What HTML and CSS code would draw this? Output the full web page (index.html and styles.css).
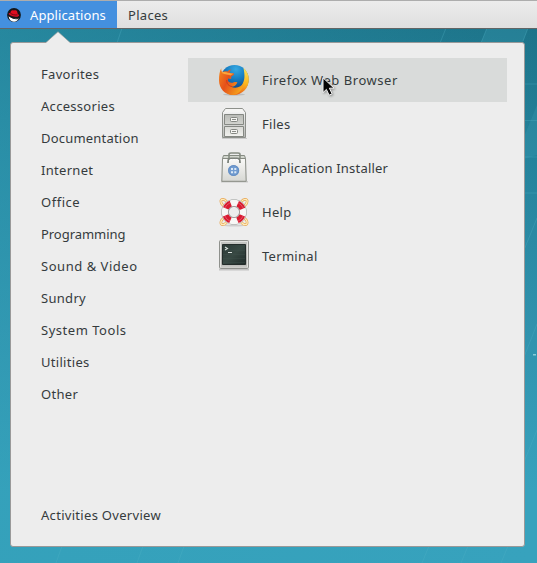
FILE: index.html
```html
<!DOCTYPE html>
<html lang="en">
<head>
<meta charset="utf-8">
<title>Applications</title>
<link rel="stylesheet" href="styles.css">
</head>
<body>
<svg class="wallpaper" viewBox="0 0 537 563" aria-hidden="true">
  <defs><linearGradient id="sky" x2="0" y2="1"><stop offset="0" stop-color="#1b7085"/><stop offset=".27" stop-color="#24829b"/><stop offset=".6" stop-color="#3193ae"/><stop offset=".87" stop-color="#37a2bd"/><stop offset="1" stop-color="#37a2bd"/></linearGradient>
  <linearGradient id="left" x2="1"><stop stop-color="#32a0b8" stop-opacity=".45"/><stop offset="1" stop-color="#32a0b8" stop-opacity="0"/></linearGradient></defs>
  <path fill="url(#sky)" d="M0 0h537v563H0z"/>
  <path fill="url(#left)" d="M0 0h537v563H0z"/>
  <path fill="#3b9bb4" fill-opacity=".3" d="M487 28h41l-14 40h-44zM537 105v50l-13 4v-22z"/>
  <path fill="none" stroke="#53b2c7" stroke-opacity=".3" d="M446 28l-6 15M487 28l-6 15M528 28l-5 13M524 84h13M524 120.500h13M524 157h13M524 193h13M537 218l-13 32M537 324l-13 33M537 430l-13 32M429 546l-7 17M468 546l-7 17M508 546l-7 17M62 546l-6 17M143 546l-6 17M184 546l-6 17M122 28l-5 15"/>
  <path fill="#8accd8" d="M533 354h3v1.500h-3z"/>
</svg>
<header class="topbar">
  <div class="tab active">
    <svg class="hat" viewBox="0 0 14 14"><circle cx="7" cy="7" r="6.900" fill="#14161a"/><path fill="#fff" d="M1.600 8.200c2 1.900 6 2.800 9.600 2l.5.500C10.500 12.800 8.800 13.700 7 13.700 4 13.600 2 11.500 1.600 8.200z"/><path fill="#111" d="M5 9.300c2 1.200 4 1.400 6.300.8v.8c-2.500.6-5 .2-6.300-.8z"/><path fill="#e00d20" d="M4 2.900c1-1.200 2-.7 3-.5 1-.4 2.700-.1 3.100.8l.7 2.800c1.300.7 1.500 1.400 1 2C10.200 9.700 4 8.600 1.700 6.300 1.400 5.500 2 5 3.300 5z"/><path stroke="#5c0811" stroke-width=".8" fill="none" d="M3.300 5.200c2 1.500 4.700 2.100 7.200 1.600"/></svg>
    <span class="app-label">Applications</span>
  </div>
  <div class="tab"><span class="places">Places</span></div>
</header>
<main class="menu">
  <svg class="pointer" viewBox="0 0 26 13"><path fill="#ededed" d="M1 13V11.500L13 .7 25 11.500V13z"/><path fill="none" stroke="#9b9b98" stroke-opacity=".65" d="M1 11.500 13 .7 25 11.500"/></svg>
  <nav class="categories">
    <a>Favorites</a><a>Accessories</a><a class="snug">Documentation</a><a>Internet</a><a class="wide">Office</a><a class="tight">Programming</a><a class="wide">Sound &amp; Video</a><a>Sundry</a><a class="wide">System Tools</a><a>Utilities</a><a>Other</a>
    <a class="overview">Activities Overview</a>
  </nav>
  <section class="apps">
    <div class="app selected">
      <svg viewBox="0 0 32 32">
        <defs><radialGradient id="globe" cx=".55" cy=".15" r=".75"><stop stop-color="#37a9e2"/><stop offset=".5" stop-color="#147abf"/><stop offset="1" stop-color="#123b7d"/></radialGradient><linearGradient id="fox" x1="0" y1="0" x2="1" y2=".5"><stop stop-color="#f58a1d"/><stop offset=".45" stop-color="#e5511b"/><stop offset="1" stop-color="#f5a11c"/></linearGradient><linearGradient id="tail" x2="0" y2="1"><stop stop-color="#ffe75b"/><stop offset=".6" stop-color="#fbb41e"/><stop offset="1" stop-color="#e9601b"/></linearGradient></defs>
        <ellipse cx="16" cy="30.500" rx="11" ry="1.200" fill="#999" opacity=".45"/>
        <circle cx="16.500" cy="15.200" r="14.200" fill="url(#globe)"/>
        <path fill="url(#tail)" d="M25.500 4c3 2.500 5.400 6.700 5.400 11.500C30.900 24 24 31 16 31c-4 0-8-2-10.500-5C12 29 21 28 24.500 20c2.200-4 2.600-8 1-16z"/>
        <path fill="url(#fox)" d="M3.300 4.300c-.2 1.800.2 3 .8 3.700 1.800-.9 3.700-1 5.500-.6 1-1.100 2.300-1.800 3.700-1.900-1.100 1-1.700 2.200-1.500 3.400l4.200.6c.4 1.300-1.300 2-2.700 3l-.2 2.400-2.700-.3c-1.400 2 .6 4.400 3.300 4.200 2.200-.3 3.400-1.600 5.700-.4-1.200 2.900-3.600 4.500-6.400 4.300 5 2.300 10.500.3 13-4.200-1 7-5.600 12.300-11 12.500C7.200 31.200 1 24.600 1 16.300 1 11.500 1.600 7 3.300 4.300z"/>
        <path fill="#ffbc48" opacity=".75" d="M3.600 8.500c2.200-.8 4.500-.6 6.200.3l2 .3 3.600.7-3.100 1.800C9 10 5.200 10.500 3.600 8.500z"/>
        <path fill="none" stroke="#cf351c" d="M8.800 16c-.5 3.500 2 6.300 5.300 6.500"/>
      </svg><span class="wide">Firefox Web Browser</span>
    </div>
    <div class="app">
      <svg viewBox="0 0 32 32"><defs><linearGradient id="metal" x2="0" y2="1"><stop stop-color="#fafafa"/><stop offset="1" stop-color="#b6b7b4"/></linearGradient><linearGradient id="drawer" x2="0" y2="1"><stop stop-color="#b9bbb6"/><stop offset="1" stop-color="#f2f2ef"/></linearGradient></defs>
        <path d="M4 30h25v1H4z" fill="#999" opacity=".4"/><path fill="url(#metal)" stroke="#8d908b" d="M4.500 4.500l3-4h17l3 4v25h-23z"/><path fill="#f5f5f3" d="M6 4l2.200-2.700h15.600L26 4z"/><g fill="url(#drawer)" stroke="#858883"><path d="M6.500 6.500h19v10h-19zM6.500 18.500h19v10h-19z"/></g><g fill="#f5f5f2" stroke="#858883"><rect x="12.500" y="9.500" width="7" height="4" rx="1"/><rect x="12.500" y="21.500" width="7" height="4" rx="1"/></g><path fill="#8a8c87" d="M14 11h4v1h-4zM14 23h4v1h-4z"/></svg><span>Files</span>
    </div>
    <div class="app">
      <svg viewBox="0 0 32 32"><defs><linearGradient id="bag" x2="0" y2="1"><stop stop-color="#fafaf8"/><stop offset="1" stop-color="#d6d7d3"/></linearGradient></defs><path d="M3 29h27v1.500H3z" fill="#888" opacity=".35"/><path fill="#d1d5cd" stroke="#858b82" d="M5.500 3.500h21l1 3h-23z"/><path fill="none" stroke="#868d83" stroke-width="1.600" d="M11 6V2.500q0-1.500 2-1.500h7q2 0 2 1.500V6"/><path fill="url(#bag)" stroke="#878b83" d="M4.500 6.500h23l.7 22.800H3.800z"/><path fill="none" stroke="#7c827b" stroke-width="1.800" d="M10 11c0-6 2-4.500 6-4.500s6-1.500 6 4.500"/><path fill="none" stroke="#fff" d="M11.500 9c.5-2 2-1.500 4.500-1.500s4-.5 4.500 1.500"/><circle cx="15.600" cy="18.500" r="5.600" fill="#729dd1"/><circle cx="15.600" cy="18.500" r="4.900" fill="none" stroke="#5e88bd" stroke-width=".8"/><path fill="#dce9f6" d="M13 15.900h2v2h-2zM16.300 15.900h2v2h-2zM13 19.200h2v2h-2zM16.300 19.200h2v2h-2z"/></svg><span class="snug">Application Installer</span>
    </div>
    <div class="app">
      <svg viewBox="0 0 32 32"><ellipse cx="16" cy="29.500" rx="10" ry="1" fill="#999" opacity=".35"/><g fill="none"><path stroke="#e6a24d" stroke-width="2.600" d="M9 6C6 2 2 3 3 6c0 2 1 2 3 4M23 6c3-4 7-3 6 0 0 2-1 2-3 4M9 26c-3 4-7 3-6 0 0-2 1-2 3-4M23 26c3 4 7 3 6 0 0-2-1-2-3-4"/><path stroke="#ffedbb" stroke-width="1.300" d="M9 6C6 2 2 3 3 6c0 2 1 2 3 4M23 6c3-4 7-3 6 0 0 2-1 2-3 4M9 26c-3 4-7 3-6 0 0-2 1-2 3-4M23 26c3 4 7 3 6 0 0-2-1-2-3-4"/></g><circle cx="16" cy="16" r="9" fill="none" stroke="#9da19f" stroke-width="7.500"/><circle cx="16" cy="16" r="9" fill="none" stroke="#f7f7f5" stroke-width="6.500"/><circle class="buoy" cx="16" cy="16" r="9"/><circle cx="16" cy="16" r="10" fill="none" stroke="#fff" stroke-opacity=".25"/><circle cx="16" cy="16" r="5.600" fill="none" stroke="#9a9290" stroke-width=".8"/></svg><span>Help</span>
    </div>
    <div class="app">
      <svg viewBox="0 0 32 32"><defs><linearGradient id="case" x2="0" y2="1"><stop stop-color="#c6c7c4"/><stop offset=".8" stop-color="#adafab"/><stop offset="1" stop-color="#d4d4d1"/></linearGradient><linearGradient id="screen" x2="1" y2="1"><stop stop-color="#2b3936"/><stop offset=".5" stop-color="#384943"/><stop offset="1" stop-color="#202c2a"/></linearGradient></defs><path d="M1 29h30v1.500H1z" fill="#888" opacity=".4"/><rect x="1.500" y="0.500" width="29" height="28" rx="1" fill="url(#case)" stroke="#8f918d"/><path fill="none" stroke="#e3e3e0" d="M2.500 27V1.500h27V27"/><path fill="url(#screen)" stroke="#242d2b" d="M4.500 4.500h23v20h-23z"/><path stroke="#3f504b" stroke-opacity=".45" d="M5 10.500h22M5 14.500h22M5 18.500h22M5 22.500h22"/><path fill="none" stroke="#d9e1dd" stroke-width="1.100" d="M7 7l2.500 1.500L7 10M10 12.500h4"/></svg><span>Terminal</span>
    </div>
  </section>
</main>
<svg class="cursor" viewBox="0 0 14 20"><path fill="#050505" stroke="#f4f4f4" d="M1 .8v14.800l3.400-3.200 2.700 5.800 3-1.400-2.700-5.600h4.700z"/></svg>
</body>
</html>
```
FILE: styles.css
```css
* { box-sizing: border-box; }
body {
  margin: 0;
  width: 537px;
  height: 563px;
  overflow: hidden;
  position: relative;
  background: #2d91aa;
  color: #353b3d;
  font: 13px/20px "Noto Sans", sans-serif;
  letter-spacing: .3px;
}
svg { display: block; }
.wallpaper { position: absolute; inset: 0; width: 537px; height: 563px; z-index: -1; }
.topbar {
  display: flex;
  height: 29px;
  border-top: 1px solid #adadad;
  border-bottom: 1px solid #626565;
  background: linear-gradient(#ececec, #dfdfdf);
}
.tab { display: flex; align-items: center; padding: 0 11px; }
.tab.active { width: 117px; padding: 0 0 0 7px; gap: 9px; background: #4490df; color: #fff; }
.app-label { letter-spacing: .1px; }
.hat { width: 14px; height: 14px; }
.menu {
  position: relative;
  display: flex;
  width: 515px;
  height: 505px;
  margin: 13px 0 0 10px;
  padding: 15px 17px 15px 0;
  border: 1px solid #999;
  border-radius: 3px;
  background: #ededed;
}
.pointer { position: absolute; left: 34px; top: -12px; width: 26px; height: 13px; }
.categories { width: 177px; display: flex; flex-direction: column; padding-left: 30px; }
.categories a { height: 32px; line-height: 32px; white-space: nowrap; }
.categories .overview { margin-top: auto; }
.apps { flex: 1; }
.app { display: flex; align-items: center; gap: 12px; height: 44px; padding-left: 30px; }
.app svg { width: 32px; height: 32px; }
.selected { background: #d9dbda; }
.wide { letter-spacing: .53px; }
.snug { letter-spacing: .2px; }
.tight { letter-spacing: -.05px; }
.buoy { fill: none; stroke: #d91b30; stroke-width: 6; stroke-dasharray: 7.07 7.07; stroke-dashoffset: -3.535; }
.cursor { position: absolute; left: 322px; top: 77px; width: 14px; height: 20px; filter: drop-shadow(1px 1px 1px #0005); }
```
